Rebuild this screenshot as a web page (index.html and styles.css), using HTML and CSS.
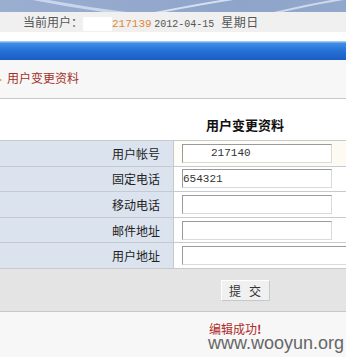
FILE: index.html
```html
<!DOCTYPE html>
<html lang="zh-CN">
<head>
    <meta charset="UTF-8">
    <title>用户变更资料</title>
    <link rel="stylesheet" href="styles.css">
</head>
<body>
    <div class="page">
        <div class="banner">
            <svg width="490" height="12" viewBox="0 0 490 12">
                <path d="M30 -2 Q 80 8 130 14" stroke="#c9d5ea" stroke-width="3" fill="none"/>
                <path d="M150 14 Q 200 4 240 -2" stroke="#d6dff0" stroke-width="2" fill="none"/>
                <path d="M270 14 Q 310 4 350 -2" stroke="#cdd8ec" stroke-width="2" fill="none"/>
            </svg>
        </div>
        <div class="status">
            当前用户：<span class="mask"></span><span class="uid">217139</span> <span class="date">2012-04-15</span><span class="week">星期日</span>
        </div>
        <div class="gap"></div>
        <div class="nav-bar"></div>

        <div class="section-title">
            <svg class="arrow" width="7" height="8" viewBox="0 0 7 8"><path d="M-3 1 L2 4 L-3 7 Z" fill="#e0a040"/></svg>用户变更资料
        </div>

        <div class="form-wrap">
            <div class="form-heading">用户变更资料</div>
            <table class="form-table">
                <tr class="first">
                    <td class="label">用户帐号</td>
                    <td class="value"><input type="text" class="field indent" value="217140"></td>
                </tr>
                <tr>
                    <td class="label">固定电话</td>
                    <td class="value"><input type="text" class="field" value="654321"></td>
                </tr>
                <tr>
                    <td class="label">移动电话</td>
                    <td class="value"><input type="text" class="field"></td>
                </tr>
                <tr>
                    <td class="label">邮件地址</td>
                    <td class="value"><input type="text" class="field"></td>
                </tr>
                <tr>
                    <td class="label">用户地址</td>
                    <td class="value"><input type="text" class="field wide"></td>
                </tr>
            </table>
            <div class="button-row">
                <button class="submit-btn">提&nbsp;&nbsp;&nbsp;交</button>
            </div>
            <div class="result">
                <span class="ok">编辑成功<b>!</b></span>
                <span class="watermark">www.wooyun.org</span>
            </div>
        </div>
    </div>
</body>
</html>
```

FILE: styles.css
```css
html, body {
    margin: 0;
    padding: 0;
    overflow: hidden;
}
body {
    font-family: "Noto Sans CJK SC", "Liberation Sans", sans-serif;
    font-size: 12px;
    background: #fff;
}
.page {
    width: 490px;
}
.banner {
    height: 12px;
    background: linear-gradient(90deg, #9aaed0, #8ea4c9 50%, #98acd0);
    overflow: hidden;
}
.banner svg {
    display: block;
}
.status {
    height: 20px;
    line-height: 20px;
    background: #f0f0f0;
    color: #555;
    padding-left: 23px;
    font-size: 12px;
    white-space: nowrap;
}
.mask {
    display: inline-block;
    width: 29px;
    height: 14px;
    background: #fff;
    vertical-align: middle;
}
.uid {
    font-family: "Liberation Mono", monospace;
    font-size: 11px;
    color: #e08838;
}
.date {
    font-family: "Liberation Mono", monospace;
    font-size: 10px;
    color: #555;
}
.week {
    margin-left: 7px;
    letter-spacing: 0.5px;
}
.gap {
    height: 9px;
    background: #fff;
}
.nav-bar {
    height: 19px;
    background: linear-gradient(180deg, #9cc8f4 0, #9cc8f4 1px, #3f8ee6 2px, #2670d6 10px, #1b5ec4 19px);
}
.section-title {
    height: 39px;
    box-sizing: border-box;
    background: #f7f7f7;
    border-bottom: 1px solid #c8c8c8;
    color: #a33028;
    font-size: 12px;
    line-height: 14px;
    padding-top: 11px;
    white-space: nowrap;
}
.arrow {
    width: 7px;
    vertical-align: -1px;
}
.form-heading {
    height: 41px;
    line-height: 52px;
    text-align: center;
    font-weight: bold;
    font-size: 13px;
    color: #111;
}
.form-table {
    width: 490px;
    border-collapse: collapse;
}
.form-table td {
    border-top: 1px solid #c6c9ce;
    border-bottom: 1px solid #c6c9ce;
    height: 24.6px;
    padding: 0;
}
.label {
    width: 160px;
    background: #dbe3ef;
    text-align: right;
    padding-right: 13px !important;
    color: #222;
    border-right: 1px solid #c6c9ce;
}
.value {
    background: #fff;
    padding-left: 8px !important;
}
.first .value {
    background: linear-gradient(90deg, #fffdf8, #fdf8ec);
}
.field {
    display: block;
    width: 150px;
    height: 19px;
    box-sizing: border-box;
    border: 1px solid #dadada;
    border-top-color: #9a9a9a;
    border-left-color: #9a9a9a;
    background: #fff;
    font-family: "Liberation Mono", monospace;
    font-size: 11px;
    color: #333;
    padding: 0;
}
.indent {
    padding-left: 28px;
}
.wide {
    width: 200px;
}
.button-row {
    height: 43px;
    box-sizing: border-box;
    background: #e3e4e3;
    border-bottom: 1px solid #c8c8c8;
    text-align: center;
    padding-top: 11px;
}
.submit-btn {
    width: 49px;
    height: 21px;
    padding: 0;
    font-family: "Noto Sans CJK SC", sans-serif;
    font-size: 12px;
    color: #333;
    background: #f0f0f0;
    border: 1px solid #fff;
    border-right-color: #c8c8c8;
    border-bottom-color: #c8c8c8;
}
.result {
    position: relative;
    height: 46px;
    background: #f7f7f7;
}
.ok {
    position: absolute;
    left: 209px;
    top: 11px;
    color: #b02a28;
    font-size: 12px;
    line-height: 12px;
}
.watermark {
    position: absolute;
    left: 208px;
    top: 25px;
    font-family: "Liberation Sans", sans-serif;
    font-size: 18px;
    line-height: 12px;
    color: #666;
}
```
